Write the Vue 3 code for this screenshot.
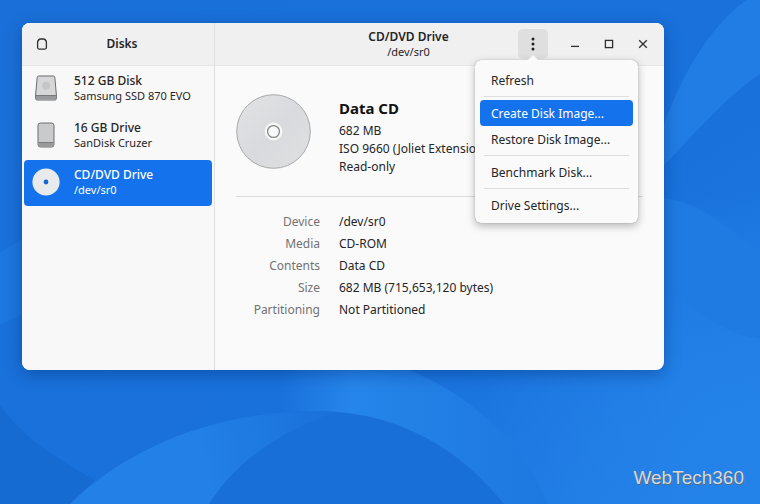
<script setup>
import { ref } from 'vue'

const drives = [
  { id: 'ssd', name: '512 GB Disk', detail: 'Samsung SSD 870 EVO' },
  { id: 'usb', name: '16 GB Drive', detail: 'SanDisk Cruzer' },
  { id: 'cd', name: 'CD/DVD Drive', detail: '/dev/sr0' },
]
const selected = ref('cd')

const facts = [
  ['Device', '/dev/sr0'],
  ['Media', 'CD-ROM'],
  ['Contents', 'Data CD'],
  ['Size', '682 MB (715,653,120 bytes)'],
  ['Partitioning', 'Not Partitioned'],
]

const menuOpen = ref(true)
const menuGroups = [
  ['Refresh'],
  ['Create Disk Image...', 'Restore Disk Image...'],
  ['Benchmark Disk...'],
  ['Drive Settings...'],
]
const activeItem = ref('Create Disk Image...')
</script>

<template>
  <div class="desktop">
    <svg class="wallpaper" viewBox="0 0 760 504" preserveAspectRatio="none" aria-hidden="true">
      <defs>
        <linearGradient id="base" x1="0" y1="0" x2="1" y2="1">
          <stop offset="0" stop-color="#1a70d8" />
          <stop offset="0.6" stop-color="#1971db" />
          <stop offset="1" stop-color="#2381e8" />
        </linearGradient>
        <radialGradient id="glow" gradientUnits="userSpaceOnUse" cx="740" cy="450" r="260">
          <stop offset="0" stop-color="#2483e8" />
          <stop offset="1" stop-color="#2483e8" stop-opacity="0" />
        </radialGradient>
        <linearGradient id="ribbon" gradientUnits="userSpaceOnUse" x1="280" y1="0" x2="540" y2="0">
          <stop offset="0" stop-color="#2685ea" stop-opacity="0" />
          <stop offset="0.28" stop-color="#2685ea" />
          <stop offset="0.5" stop-color="#2381e6" />
          <stop offset="1" stop-color="#1d78e0" />
        </linearGradient>
        <linearGradient id="wave" gradientUnits="userSpaceOnUse" x1="120" y1="470" x2="320" y2="420">
          <stop offset="0" stop-color="#2380e6" />
          <stop offset="0.4" stop-color="#2280e6" />
          <stop offset="1" stop-color="#1a72da" />
        </linearGradient>
      </defs>
      <rect width="760" height="504" fill="url(#base)" />
      <rect width="760" height="504" fill="url(#glow)" />
      <path d="M0 405C22 436 50 455 95 480L70 504H0Z" fill="#156bd1" />
      <path d="M0 252L30 235V310L0 325Z" fill="#1c77df" />
      <path d="M280 360H380C465 385 520 440 548 504H280Z" fill="url(#ribbon)" />
      <path d="M70 504C130 445 220 411 315 411C400 411 460 450 504 504Z" fill="#186fd7" />
      <path d="M70 504C130 445 220 411 315 411L335 412C290 428 240 455 209 504Z" fill="url(#wave)" />
      <path d="M650 170C670 95 700 35 746 0H760V74C720 102 698 131 650 180Z" fill="#217de3" />
      <path d="M650 197C700 198 720 225 760 250V339C715 331 685 302 650 272Z" fill="#1f7be1" />
    </svg>

    <main class="window">
      <aside class="sidebar">
        <header class="bar side-bar">
          <button class="icon-button" type="button" aria-label="Attach disk image">
            <svg width="12" height="12" viewBox="0 0 12 12">
              <path d="M1.6 4.2Q2.2 1 4.6 1H7.4Q9.8 1 10.4 4.2V9.6Q10.4 11.1 8.9 11.1H3.1Q1.6 11.1 1.6 9.6Z" fill="none" stroke="#303033" stroke-width="1.3" />
            </svg>
          </button>
          <h1 class="title">Disks</h1>
        </header>
        <nav class="drive-list" aria-label="Drives">
          <button
            v-for="drive in drives"
            :key="drive.id"
            type="button"
            class="drive"
            :class="{ selected: selected === drive.id }"
            @click="selected = drive.id"
          >
            <svg v-if="drive.id === 'ssd'" class="drive-icon" viewBox="0 0 28 28">
              <path d="M6.6 2H21.4Q22.6 2 22.8 3.2L24.4 21V24.6Q24.4 26 23 26H5Q3.6 26 3.6 24.6V21L5.2 3.2Q5.4 2 6.6 2Z" fill="#d6d7d8" stroke="#6c6d6f" />
              <path d="M4 21.5H24V24.4Q24 25.5 23 25.5H5Q4 25.5 4 24.4Z" fill="#98999b" />
              <path d="M4 21.5H24" stroke="#77787a" />
              <circle cx="14.2" cy="11.7" r="4" fill="#c5c6c8" />
            </svg>
            <svg v-else-if="drive.id === 'usb'" class="drive-icon" viewBox="0 0 28 28">
              <rect x="6" y="2" width="16" height="24" rx="2.5" fill="#c9cacb" stroke="#6c6d6f" />
              <path d="M6.5 21.5H21.5V24Q21.5 25.5 20 25.5H8Q6.5 25.5 6.5 24Z" fill="#98999b" />
              <path d="M6.5 21.5H21.5" stroke="#7c7d7f" />
            </svg>
            <svg v-else class="drive-icon" viewBox="0 0 28 28">
              <circle cx="14" cy="14" r="13.6" fill="#e9eaeb" />
              <circle cx="14" cy="14" r="2.4" fill="#1767d4" />
            </svg>
            <span class="drive-text">
              <span class="drive-name">{{ drive.name }}</span>
              <span class="drive-detail">{{ drive.detail }}</span>
            </span>
          </button>
        </nav>
      </aside>

      <section class="content">
        <header class="bar main-bar">
          <div class="heading">
            <h2 class="title">CD/DVD Drive</h2>
            <p class="subtitle">/dev/sr0</p>
          </div>
          <div class="menu-anchor">
            <button class="menu-button" type="button" aria-label="Drive menu" :aria-expanded="menuOpen" @click="menuOpen = !menuOpen">
              <svg width="4" height="14" viewBox="0 0 4 14" fill="#222">
                <circle cx="2" cy="2" r="1.5" /><circle cx="2" cy="7" r="1.5" /><circle cx="2" cy="12" r="1.5" />
              </svg>
            </button>
            <div v-if="menuOpen" class="popover" role="menu">
              <div v-for="group in menuGroups" :key="group[0]" class="menu-group">
                <button
                  v-for="item in group"
                  :key="item"
                  type="button"
                  role="menuitem"
                  class="menu-item"
                  :class="{ active: activeItem === item }"
                  @mouseenter="activeItem = item"
                >{{ item }}</button>
              </div>
            </div>
          </div>
          <div class="window-controls">
            <button class="control" type="button" aria-label="Minimize">
              <svg width="10" height="10" viewBox="0 0 10 10" stroke="#303033" stroke-width="1.3"><path d="M1 7.4H9" /></svg>
            </button>
            <button class="control" type="button" aria-label="Maximize">
              <svg width="10" height="10" viewBox="0 0 10 10" fill="none" stroke="#303033" stroke-width="1.3"><rect x="1.4" y="1.4" width="7.2" height="7.2" /></svg>
            </button>
            <button class="control" type="button" aria-label="Close">
              <svg width="10" height="10" viewBox="0 0 10 10" stroke="#303033" stroke-width="1.3"><path d="M1.2 1.2L8.8 8.8M8.8 1.2L1.2 8.8" /></svg>
            </button>
          </div>
        </header>

        <div class="body">
          <div class="summary">
            <svg class="disc" viewBox="0 0 76 76" aria-hidden="true">
              <defs>
                <linearGradient id="disc" x1="0" y1="0" x2="1" y2="1">
                  <stop offset="0" stop-color="#e2e3e5" />
                  <stop offset="0.5" stop-color="#d9dadd" />
                  <stop offset="1" stop-color="#dfe0e2" />
                </linearGradient>
              </defs>
              <circle cx="38" cy="38" r="37.3" fill="url(#disc)" stroke="#a6a7a9" />
              <circle cx="38" cy="38" r="9" fill="#f7f7f8" />
              <circle cx="38" cy="38" r="6" fill="#fafafa" stroke="#858688" stroke-width="1.3" />
            </svg>
            <div class="summary-text">
              <h3 class="volume">Data CD</h3>
              <p>682 MB</p>
              <p>ISO 9660 (Joliet Extension)</p>
              <p>Read-only</p>
            </div>
          </div>
          <dl class="facts">
            <template v-for="[label, value] in facts" :key="label">
              <dt>{{ label }}</dt>
              <dd>{{ value }}</dd>
            </template>
          </dl>
        </div>
      </section>
    </main>

    <span class="watermark">WebTech360</span>
  </div>
</template>

<style>
body {
  margin: 0;
}
</style>

<style scoped>
.desktop {
  position: relative;
  box-sizing: border-box;
  display: flex;
  min-height: 100vh;
  padding: 23px 96px 134px 22px;
  background: #1a71da;
  color: #252527;
  font-family: "Noto Sans", sans-serif;
  font-size: 12px;
  line-height: 18px;
}
.wallpaper {
  position: absolute;
  inset: 0;
  width: 100%;
  height: 100%;
}
h1, h2, h3, p, dl, dd {
  margin: 0;
}
button {
  box-sizing: border-box;
  padding: 0;
  border: 0;
  background: none;
  color: inherit;
  font: inherit;
}
.window {
  position: relative;
  flex: 1;
  display: grid;
  grid-template-columns: 193px 1fr;
  border-radius: 8px;
  background: #fafafa;
  box-shadow: 0 4px 16px rgba(0, 40, 110, 0.4);
}
.sidebar {
  border-right: 1px solid #dedfe1;
  border-radius: 8px 0 0 8px;
  background: #f8f8f9;
}
.bar {
  box-sizing: border-box;
  display: flex;
  align-items: center;
  height: 43px;
  border-bottom: 1px solid #e6e6e8;
  background: #f0f0f1;
}
.side-bar {
  padding: 0 12px;
  border-radius: 8px 0 0 0;
}
.main-bar {
  padding-right: 4px;
  border-radius: 0 8px 0 0;
}
.icon-button,
.control {
  display: grid;
  place-items: center;
}
.icon-button {
  width: 16px;
  height: 24px;
}
.title {
  font-size: 12px;
  line-height: 16px;
  font-weight: 600;
}
.side-bar .title {
  flex: 1;
  text-align: center;
  padding-right: 8px;
}
.drive-list {
  display: flex;
  flex-direction: column;
  gap: 1px;
  padding: 0 2px;
}
.drive {
  display: flex;
  align-items: center;
  gap: 14px;
  height: 46px;
  padding: 0 8px 2px;
  border-radius: 4px;
  text-align: left;
}
.drive.selected {
  background: #1472ec;
  color: #fff;
}
.drive-icon {
  width: 28px;
  height: 28px;
}
.drive-text {
  display: grid;
}
.drive-name {
  font-size: 12px;
  line-height: 16px;
  font-weight: 500;
}
.drive-detail,
.subtitle {
  font-size: 11px;
  line-height: 14px;
}
.heading {
  flex: 1;
  padding-left: 84px;
  text-align: center;
}
.menu-anchor {
  position: relative;
}
.menu-button {
  display: grid;
  place-items: center;
  width: 30px;
  height: 30px;
  border-radius: 5px;
  background: #dfdfe0;
}
.popover {
  position: absolute;
  z-index: 2;
  top: 31px;
  right: -90px;
  box-sizing: border-box;
  width: 163px;
  padding: 7px 5px 5px;
  border-radius: 6px;
  background: #fafafa;
  box-shadow: 0 0 1px rgba(0, 0, 0, 0.45), 0 3px 8px rgba(0, 0, 0, 0.28);
}
.popover::before {
  content: "";
  position: absolute;
  top: -5px;
  left: 52px;
  border: 6px solid transparent;
  border-top: 0;
  border-bottom-color: #fafafa;
}
.menu-group + .menu-group::before {
  content: "";
  display: block;
  height: 1px;
  margin: 3px 4px;
  background: #dededf;
}
.menu-item {
  display: block;
  width: 100%;
  height: 26px;
  padding: 2px 11px 0;
  border-radius: 4px;
  text-align: left;
  white-space: nowrap;
}
.menu-item.active {
  background: #1472ec;
  color: #fff;
}
.window-controls {
  display: flex;
  padding-left: 10px;
}
.control {
  width: 34px;
  height: 30px;
}
.body {
  padding: 28px 21px 24px;
}
.summary {
  display: flex;
  align-items: flex-start;
  gap: 28px;
  padding-bottom: 20px;
  border-bottom: 1px solid #dcdcde;
}
.disc {
  flex: none;
  width: 75px;
  height: 75px;
}
.summary-text {
  white-space: nowrap;
}
.volume {
  font-size: 15px;
  line-height: 28px;
  font-weight: 700;
  color: #111;
}
.facts {
  display: grid;
  grid-template-columns: 84px 1fr;
  column-gap: 19px;
  padding-top: 14px;
  line-height: 22px;
}
.facts dt {
  color: #727274;
  text-align: right;
}
.watermark {
  position: absolute;
  right: 16px;
  bottom: 15px;
  color: #d3dae2;
  font-family: "Liberation Sans", sans-serif;
  font-size: 19px;
  line-height: 22px;
  text-shadow: 1px 1px 0 #5d6670;
}
</style>
